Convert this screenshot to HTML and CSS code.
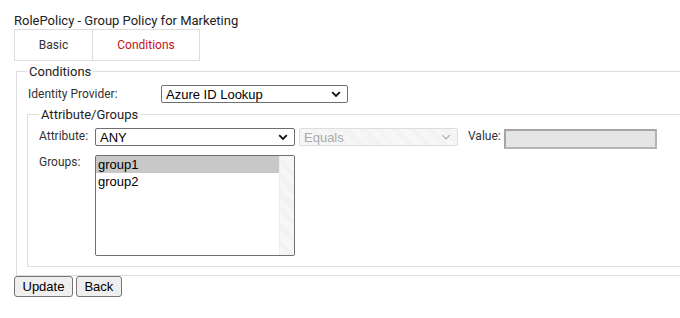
FILE: index.html
```html
<!DOCTYPE html>
<html>
<head>
<meta charset="utf-8">
<link rel="stylesheet" href="styles.css">
</head>
<body>
<div class="page">
  <div class="title">RolePolicy - Group Policy for Marketing</div>
  <div class="tabs">
    <div class="tab tab-basic">Basic</div>
    <div class="tab tab-active">Conditions</div>
  </div>
  <fieldset class="fs-outer">
    <legend>Conditions</legend>
    <div class="row row-idp">
      <label class="lbl lbl-idp">Identity Provider:</label>
      <div class="sel sel-idp">Azure ID Lookup<svg class="chev" width="10" height="7" viewBox="0 0 10 7"><path d="M1.2 1.2 L5 5 L8.8 1.2" fill="none" stroke="#111" stroke-width="1.8"/></svg></div>
    </div>
    <fieldset class="fs-inner">
      <legend>Attribute/Groups</legend>
      <div class="row row-attr">
        <label class="lbl lbl-attr">Attribute:</label>
        <div class="sel sel-attr">ANY<svg class="chev" width="10" height="7" viewBox="0 0 10 7"><path d="M1.2 1.2 L5 5 L8.8 1.2" fill="none" stroke="#111" stroke-width="1.8"/></svg></div>
        <div class="sel sel-dis">Equals<svg class="chev" width="10" height="7" viewBox="0 0 10 7"><path d="M1.2 1.2 L5 5 L8.8 1.2" fill="none" stroke="#aaa" stroke-width="1.2"/></svg></div>
        <label class="lbl lbl-val">Value:</label>
        <div class="inp-dis"></div>
      </div>
      <div class="row row-groups">
        <label class="lbl lbl-groups">Groups:</label>
        <div class="listbox">
          <div class="opts">
            <div class="opt opt-sel">group1</div>
            <div class="opt">group2</div>
          </div>
          <div class="track"></div>
        </div>
      </div>
    </fieldset>
  </fieldset>
  <div class="buttons">
    <button class="btn">Update</button>
    <button class="btn">Back</button>
  </div>
</div>
</body>
</html>
```

FILE: styles.css
```css
html, body {
  margin: 0;
  padding: 0;
  overflow: hidden;
  background: #fff;
}
.page {
  padding: 12px 0 0 14px;
  width: 700px;
  font-family: Roboto, "Liberation Sans", sans-serif;
  color: #222;
}
.title {
  font-size: 13px;
  line-height: 17px;
  color: #222;
}
.tabs {
  display: flex;
  width: 184px;
  height: 30px;
  border: 1px solid #ddd;
  box-sizing: content-box;
}
.tab {
  display: flex;
  align-items: center;
  justify-content: center;
  font-size: 12px;
  color: #333;
}
.tab-basic {
  width: 77px;
  border-right: 1px solid #ddd;
}
.tab-active {
  flex: 1;
  color: #c8101a;
}
fieldset {
  border: 1px solid #ddd;
  margin: 0;
  min-width: 0;
}
legend {
  font-size: 13px;
  color: #222;
  padding: 0 2px;
}
.fs-outer {
  margin: 3px 0 0 2px;
  padding: 6px 0 8px 10px;
}
.fs-inner {
  margin: 4px 0 0 0;
  padding: 2px 0 10px 11px;
}
.row {
  display: flex;
  align-items: center;
}
.lbl {
  font-size: 12px;
  color: #333;
}
.lbl-idp {
  width: 134px;
  padding-left: 1px;
  box-sizing: border-box;
}
.sel {
  position: relative;
  box-sizing: border-box;
  height: 18px;
  border: 1px solid #6f6f6f;
  border-radius: 2px;
  background: #fff;
  font-family: "Liberation Sans", Arial, sans-serif;
  font-size: 13px;
  color: #000;
  padding: 0 0 0 4px;
  display: flex;
  align-items: center;
}
.chev {
  position: absolute;
  right: 6px;
  top: 5px;
}
.sel-idp {
  width: 187px;
}
.row-attr {
  margin-top: 4px;
  align-items: flex-start;
}
.lbl-attr {
  width: 56px;
  padding-top: 1px;
}
.sel-attr {
  width: 200px;
}
.sel-dis {
  margin-left: 4px;
  width: 159px;
  border-color: #ddd;
  color: #aaa;
  background: repeating-linear-gradient(45deg, #fafafa 0 1px, #f0f0f0 1px 2px);
}
.lbl-val {
  margin-left: 10px;
  padding-top: 1px;
  width: 36px;
}
.inp-dis {
  box-sizing: border-box;
  width: 153px;
  height: 20px;
  background: #e5e5e5;
  border: 2px solid #b4b4b4;
  border-top-color: #a5a5a5;
  border-left-color: #a5a5a5;
  margin-top: 1px;
}
.row-groups {
  margin-top: 6px;
  align-items: flex-start;
}
.lbl-groups {
  width: 56px;
  padding-top: 0;
}
.listbox {
  box-sizing: border-box;
  width: 200px;
  height: 101px;
  border: 1px solid #6f6f6f;
  border-radius: 2px;
  display: flex;
  background: #fff;
}
.opts {
  flex: 1;
  padding-top: 0;
}
.opt {
  font-family: "Liberation Sans", Arial, sans-serif;
  font-size: 13px;
  line-height: 17px;
  color: #000;
  padding-left: 2px;
}
.opt-sel {
  background: #c8c8c8;
}
.track {
  width: 14px;
  border-left: 1px solid #eee;
  background: repeating-linear-gradient(45deg, #fbfbfb 0 1px, #eeeeee 1px 2px);
}
.buttons {
  display: flex;
  gap: 3px;
  margin-top: 0;
}
.btn {
  box-sizing: border-box;
  height: 21px;
  font-family: "Liberation Sans", Arial, sans-serif;
  font-size: 13px;
  color: #000;
  background: #efefef;
  border: 1px solid #767676;
  border-radius: 3px;
  padding: 0 7.5px;
  margin: 0;
}
```
